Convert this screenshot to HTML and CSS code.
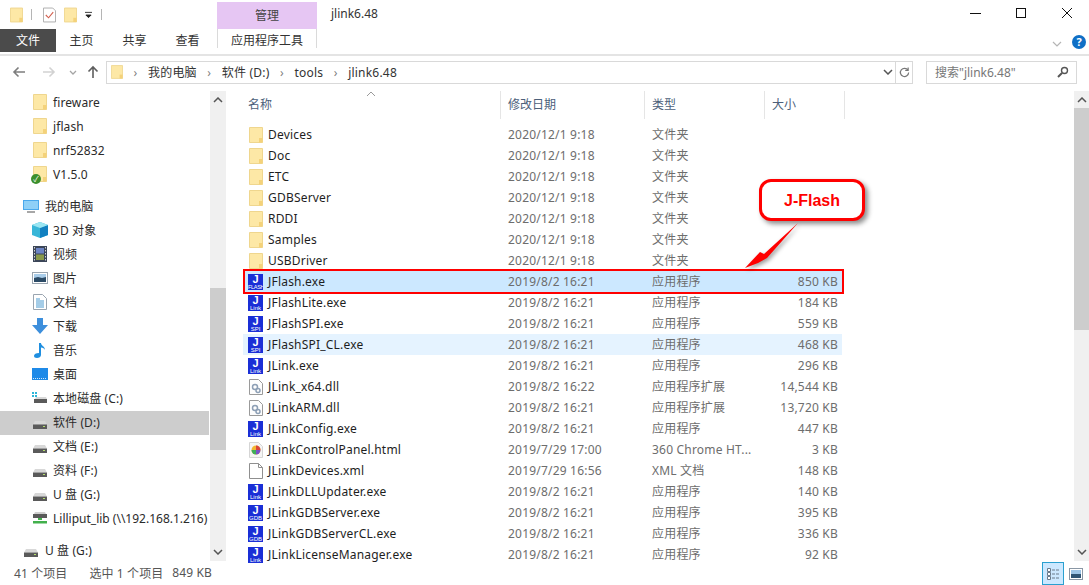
FILE: index.html
```html
<!DOCTYPE html>
<html lang="zh-CN">
<head>
    <meta charset="UTF-8">
    <title>jlink6.48</title>
    <link rel="stylesheet" href="styles.css">
</head>
<body>
    <svg class="sprites" width="0" height="0">
        <symbol id="folder" viewBox="0 0 14 16">
            <path d="M.5.500h13v15H.5z" fill="#fde8a6" stroke="#efd68e"/>
            <path d="M10 11h3.500v4.500H10z" fill="#f4d27a"/>
        </symbol>
        <symbol id="drive" viewBox="0 0 16 10">
            <path d="M1 4.500 3 1h10l2 3.500z" fill="#d8d8d8"/>
            <rect x="1" y="4.500" width="14" height="4.500" fill="#5a5a5a"/>
            <rect x="11" y="6" width="2" height="1" fill="#b5e06c"/>
        </symbol>
        <symbol id="dll" viewBox="0 0 14 16">
            <path d="M.5.500h9l4 4v11H.5z" fill="#fdfdfd" stroke="#9a9a9a"/>
            <circle cx="6" cy="8" r="2.500" fill="none" stroke="#8d9fb5" stroke-width="1.500"/>
            <circle cx="9" cy="11.500" r="2" fill="none" stroke="#8d9fb5" stroke-width="1.500"/>
        </symbol>
    </svg>

    <div class="window">
        <header class="titlebar">
            <div class="qat">
                <svg class="qat-icon"><use href="#folder"/></svg>
                <span class="qat-sep"></span>
                <svg class="qat-icon" viewBox="0 0 14 16">
                    <path d="M.5.500h10l3 3v12H.5z" fill="#fff" stroke="#aaa"/>
                    <path d="M3 8l3 3 5-6" fill="none" stroke="#d2604f" stroke-width="1.200"/>
                </svg>
                <svg class="qat-icon"><use href="#folder"/></svg>
                <svg class="qat-more" viewBox="0 0 8 8"><path d="M0 1h8M1 4h6l-3 3z" stroke="#222" fill="#222"/></svg>
                <span class="qat-sep"></span>
            </div>
            <div class="ctx-tab">管理</div>
            <div class="title">jlink6.48</div>
            <div class="controls">
                <svg viewBox="0 0 46 29"><path d="M19 13.500h11" stroke="#111"/></svg>
                <svg viewBox="0 0 46 29"><rect x="19.500" y="8.500" width="9" height="9" fill="none" stroke="#111"/></svg>
                <svg viewBox="0 0 46 29"><path d="M19 8l10 10M29 8 19 18" stroke="#111"/></svg>
            </div>
        </header>

        <nav class="ribbon">
            <a class="tab tab-file">文件</a>
            <a class="tab">主页</a>
            <a class="tab">共享</a>
            <a class="tab">查看</a>
            <a class="tab tab-tools">应用程序工具</a>
            <svg class="ribbon-chev" viewBox="0 0 10 6"><path d="M1 1l4 4 4-4" fill="none" stroke="#b5b5b5" stroke-width="1.200"/></svg>
            <span class="help">?</span>
        </nav>

        <div class="addressbar">
            <svg class="nav-arrow" viewBox="0 0 14 12"><path d="M13 6H2M6.500 1.500 2 6l4.500 4.500" fill="none" stroke="#7d7d7d" stroke-width="1.600"/></svg>
            <svg class="nav-arrow" viewBox="0 0 14 12"><path d="M1 6h11M7.500 1.500 12 6l-4.500 4.500" fill="none" stroke="#d2d2d2" stroke-width="1.600"/></svg>
            <svg class="nav-drop" viewBox="0 0 8 5"><path d="M1 1l3 3 3-3" fill="none" stroke="#a5a5a5" stroke-width="1.300"/></svg>
            <svg class="nav-arrow nav-up" viewBox="0 0 12 14"><path d="M6 13V2M1.500 6.500 6 2l4.500 4.500" fill="none" stroke="#5e5e5e" stroke-width="1.600"/></svg>
            <div class="path">
                <svg class="path-icon"><use href="#folder"/></svg>
                <span class="crumb-sep">›</span><span>我的电脑</span>
                <span class="crumb-sep">›</span><span>软件 (D:)</span>
                <span class="crumb-sep">›</span><span>tools</span>
                <span class="crumb-sep">›</span><span>jlink6.48</span>
                <svg class="path-drop" viewBox="0 0 10 6"><path d="M1 1l4 4 4-4" fill="none" stroke="#555" stroke-width="1.500"/></svg>
                <span class="path-refresh">
                    <svg viewBox="0 0 12 12"><path d="M9.800 3.500A4.500 4.500 0 1 0 10.500 6M10 .5v3.300H6.800" fill="none" stroke="#777" stroke-width="1.300"/></svg>
                </span>
            </div>
            <div class="search">
                <span>搜索"jlink6.48"</span>
                <svg viewBox="0 0 12 12"><circle cx="7.500" cy="4.500" r="3" fill="none" stroke="#555" stroke-width="1.400"/><path d="M5 7l-4 4" stroke="#555" stroke-width="2"/></svg>
            </div>
        </div>

        <main class="main">
            <aside class="sidebar">
                <ul class="tree">
                    <li class="tree-item"><svg class="ti"><use href="#folder"/></svg>fireware</li>
                    <li class="tree-item"><svg class="ti"><use href="#folder"/></svg>jflash</li>
                    <li class="tree-item"><svg class="ti"><use href="#folder"/></svg>nrf52832</li>
                    <li class="tree-item"><span class="ti-wrap"><svg class="ti"><use href="#folder"/></svg><span class="sync-badge">✓</span></span>V1.5.0</li>
                    <li class="tree-item tree-root tree-gap">
                        <svg class="ti ti-wide" viewBox="0 0 16 16"><rect x="0" y="2" width="16" height="10" fill="#4aa8ec"/><rect x="1" y="3" width="14" height="8" fill="#8fd0f7"/><path d="M4 14h8" stroke="#8a8a8a" stroke-width="1.500"/></svg>我的电脑
                    </li>
                    <li class="tree-item">
                        <svg class="ti ti-wide" viewBox="0 0 16 16"><path d="M8 0l8 3v10l-8 3-8-3V3z" fill="#38b6d8"/><path d="M8 6l8-3v10l-8 3z" fill="#1180c0"/><path d="M0 3l8-3 8 3-8 3z" fill="#9be6f2"/></svg>3D 对象
                    </li>
                    <li class="tree-item">
                        <svg class="ti" viewBox="0 0 14 16"><rect width="14" height="16" fill="#3c4658"/><rect x="3" y="2" width="8" height="5.500" fill="#6d84c4"/><rect x="3" y="8.500" width="8" height="5.500" fill="#8a9a4a"/><path d="M1.500 1v14M12.500 1v14" stroke="#d5d5d5" stroke-dasharray="1.500 1.500"/></svg>视频
                    </li>
                    <li class="tree-item">
                        <svg class="ti ti-wide" viewBox="0 0 16 14"><rect x=".5" y="1.500" width="15" height="11" fill="#fff" stroke="#9aa5b0"/><rect x="2" y="3" width="12" height="4" fill="#a9cdea"/><path d="M2 7l4-1 4 1 4-1v5H2z" fill="#2c4b66"/></svg>图片
                    </li>
                    <li class="tree-item">
                        <svg class="ti" viewBox="0 0 14 16"><path d="M.5.500h9l4 4v11H.5z" fill="#fff" stroke="#9aa5b0"/><path d="M3 5h4M3 7h8M3 9h8M3 11h8M3 13h8" stroke="#4a9ad0"/></svg>文档
                    </li>
                    <li class="tree-item">
                        <svg class="ti ti-wide" viewBox="0 0 16 16"><path d="M5 0h6v7h5l-8 9-8-9h5z" fill="#3d8fdc"/></svg>下载
                    </li>
                    <li class="tree-item">
                        <svg class="ti" viewBox="0 0 14 16"><path d="M6 1h2c0 3 4 3 4 7-1-2-2-2-4-2.500V13c0 2-2 3-4 3s-3-1-3-2.300S3 11 6 11z" fill="#1f8fe0"/></svg>音乐
                    </li>
                    <li class="tree-item">
                        <svg class="ti ti-wide" viewBox="0 0 16 14"><rect y="1" width="16" height="12" fill="#1e8ae8"/><path d="M1 11.500h14" stroke="#cfe8fa" stroke-dasharray="1 1"/></svg>桌面
                    </li>
                    <li class="tree-item">
                        <svg class="ti ti-wide" viewBox="0 0 16 14"><path d="M0 1h2v2H0zM3 1h2v2H3zM0 4h2v2H0zM3 4h2v2H3z" fill="#2db5d8"/><path d="M3 8l1-2h10l1 2z" fill="#d8d8d8"/><rect x="2" y="8" width="13" height="4" fill="#5a5a5a"/></svg>本地磁盘 (C:)
                    </li>
                    <li class="tree-item is-selected"><svg class="ti ti-wide ti-drive"><use href="#drive"/></svg>软件 (D:)</li>
                    <li class="tree-item"><svg class="ti ti-wide ti-drive"><use href="#drive"/></svg>文档 (E:)</li>
                    <li class="tree-item"><svg class="ti ti-wide ti-drive"><use href="#drive"/></svg>资料 (F:)</li>
                    <li class="tree-item"><svg class="ti ti-wide ti-drive"><use href="#drive"/></svg>U 盘 (G:)</li>
                    <li class="tree-item tree-long">
                        <svg class="ti ti-wide" viewBox="0 0 16 14"><path d="M2 3l1-2h10l1 2z" fill="#cfcfcf"/><rect x="1" y="3" width="14" height="4" fill="#5a5a5a"/><path d="M6 7h4v2H6zM1 10h14v2.500H1z" fill="#42b04c"/></svg>Lilliput_lib (\\192.168.1.216)
                    </li>
                    <li class="tree-item tree-root tree-gap"><svg class="ti ti-wide ti-drive"><use href="#drive"/></svg>U 盘 (G:)</li>
                </ul>
                <div class="scrollbar scrollbar-nav">
                    <svg viewBox="0 0 10 6"><path d="M1 5l4-4 4 4" fill="none" stroke="#555" stroke-width="1.500"/></svg>
                    <span class="thumb"></span>
                    <svg viewBox="0 0 10 6"><path d="M1 1l4 4 4-4" fill="none" stroke="#555" stroke-width="1.500"/></svg>
                </div>
            </aside>

            <section class="files">
                <div class="file-pane">
                    <div class="col-head">
                        <span>名称<svg class="sort" viewBox="0 0 8 4"><path d="M0 4l4-4 4 4" fill="none" stroke="#9a9a9a"/></svg></span>
                        <span>修改日期</span>
                        <span>类型</span>
                        <span>大小</span>
                    </div>
                    <ul class="rows">
                        <li class="row"><span class="name"><svg class="fi"><use href="#folder"/></svg>Devices</span><span>2020/12/1 9:18</span><span>文件夹</span><span></span></li>
                        <li class="row"><span class="name"><svg class="fi"><use href="#folder"/></svg>Doc</span><span>2020/12/1 9:18</span><span>文件夹</span><span></span></li>
                        <li class="row"><span class="name"><svg class="fi"><use href="#folder"/></svg>ETC</span><span>2020/12/1 9:18</span><span>文件夹</span><span></span></li>
                        <li class="row"><span class="name"><svg class="fi"><use href="#folder"/></svg>GDBServer</span><span>2020/12/1 9:18</span><span>文件夹</span><span></span></li>
                        <li class="row"><span class="name"><svg class="fi"><use href="#folder"/></svg>RDDI</span><span>2020/12/1 9:18</span><span>文件夹</span><span></span></li>
                        <li class="row"><span class="name"><svg class="fi"><use href="#folder"/></svg>Samples</span><span>2020/12/1 9:18</span><span>文件夹</span><span></span></li>
                        <li class="row"><span class="name"><svg class="fi"><use href="#folder"/></svg>USBDriver</span><span>2020/12/1 9:18</span><span>文件夹</span><span></span></li>
                        <li class="row is-picked"><span class="name"><span class="jicon"><b>J</b><i class="tight">FLASH</i></span>JFlash.exe</span><span>2019/8/2 16:21</span><span>应用程序</span><span class="size">850 KB</span></li>
                        <li class="row"><span class="name"><span class="jicon"><b>J</b><i>Link</i></span>JFlashLite.exe</span><span>2019/8/2 16:21</span><span>应用程序</span><span class="size">184 KB</span></li>
                        <li class="row"><span class="name"><span class="jicon"><b>J</b><i>SPI</i></span>JFlashSPI.exe</span><span>2019/8/2 16:21</span><span>应用程序</span><span class="size">559 KB</span></li>
                        <li class="row is-hover"><span class="name"><span class="jicon"><b>J</b><i>SPI</i></span>JFlashSPI_CL.exe</span><span>2019/8/2 16:21</span><span>应用程序</span><span class="size">468 KB</span></li>
                        <li class="row"><span class="name"><span class="jicon"><b>J</b><i>Link</i></span>JLink.exe</span><span>2019/8/2 16:21</span><span>应用程序</span><span class="size">296 KB</span></li>
                        <li class="row"><span class="name"><svg class="fi"><use href="#dll"/></svg>JLink_x64.dll</span><span>2019/8/2 16:22</span><span>应用程序扩展</span><span class="size">14,544 KB</span></li>
                        <li class="row"><span class="name"><svg class="fi"><use href="#dll"/></svg>JLinkARM.dll</span><span>2019/8/2 16:21</span><span>应用程序扩展</span><span class="size">13,720 KB</span></li>
                        <li class="row"><span class="name"><span class="jicon"><b>J</b><i>Link</i></span>JLinkConfig.exe</span><span>2019/8/2 16:21</span><span>应用程序</span><span class="size">447 KB</span></li>
                        <li class="row"><span class="name"><svg class="fi" viewBox="0 0 14 16"><path d="M.5.500h9l4 4v11H.5z" fill="#f5f5f5" stroke="#d5d5d5"/><circle cx="7" cy="8" r="4.500" fill="#f2b632"/><path d="M7 3.500A4.500 4.500 0 0 1 11.500 8H7z" fill="#d8443c"/><path d="M7 8h4.500A4.500 4.500 0 0 1 7 12.500z" fill="#7a4fc8"/><path d="M7 8v4.500A4.500 4.500 0 0 1 2.500 8z" fill="#3fae5a"/></svg>JLinkControlPanel.html</span><span>2019/7/29 17:00</span><span>360 Chrome HT...</span><span class="size">3 KB</span></li>
                        <li class="row"><span class="name"><svg class="fi" viewBox="0 0 14 16"><path d="M.5.500h9l4 4v11H.5z" fill="#fff" stroke="#8f8f8f"/><path d="M9.500.500v4h4" fill="none" stroke="#8f8f8f"/></svg>JLinkDevices.xml</span><span>2019/7/29 16:56</span><span>XML 文档</span><span class="size">148 KB</span></li>
                        <li class="row"><span class="name"><span class="jicon"><b>J</b><i>Link</i></span>JLinkDLLUpdater.exe</span><span>2019/8/2 16:21</span><span>应用程序</span><span class="size">140 KB</span></li>
                        <li class="row"><span class="name"><span class="jicon"><b>J</b><i>GDB</i></span>JLinkGDBServer.exe</span><span>2019/8/2 16:21</span><span>应用程序</span><span class="size">395 KB</span></li>
                        <li class="row"><span class="name"><span class="jicon"><b>J</b><i>GDB</i></span>JLinkGDBServerCL.exe</span><span>2019/8/2 16:21</span><span>应用程序</span><span class="size">336 KB</span></li>
                        <li class="row"><span class="name"><span class="jicon"><b>J</b><i>Link</i></span>JLinkLicenseManager.exe</span><span>2019/8/2 16:21</span><span>应用程序</span><span class="size">92 KB</span></li>
                    </ul>
                </div>
                <div class="scrollbar scrollbar-files">
                    <svg viewBox="0 0 10 6"><path d="M1 5l4-4 4 4" fill="none" stroke="#555" stroke-width="1.500"/></svg>
                    <span class="thumb"></span>
                    <svg viewBox="0 0 10 6"><path d="M1 1l4 4 4-4" fill="none" stroke="#555" stroke-width="1.500"/></svg>
                </div>
            </section>
        </main>

        <footer class="statusbar">
            <span class="status-count">41 个项目</span>
            <span class="status-sel">选中 1 个项目</span>
            <span>849 KB</span>
            <div class="views">
                <span class="view is-on">
                    <svg viewBox="0 0 14 14"><path d="M1.500 1.500h3v3h-3zM1.500 5.500h3v3h-3zM1.500 9.500h3v3h-3z" fill="#fff" stroke="#6a7a8a"/><path d="M6 3h7M6 7h7M6 11h7" stroke="#6a7a8a" stroke-dasharray="3 1"/></svg>
                </span>
                <span class="view">
                    <svg viewBox="0 0 14 12"><rect x=".5" y=".5" width="13" height="11" fill="#fff" stroke="#8a97a5"/><rect x="2" y="2" width="10" height="4" fill="#9cc4e6"/><rect x="2" y="6" width="10" height="4" fill="#2f5474"/></svg>
                </span>
            </div>
        </footer>
    </div>

    <!-- annotation drawn on top of the screenshot -->
    <div class="callout">J-Flash</div>
    <svg class="callout-arrow" viewBox="0 0 70 60">
        <path d="M56 2 22 33l-4-2L3 47l13-5 9-5z" fill="#f00"/>
    </svg>
</body>
</html>
```

FILE: styles.css
```css
/* General */
* {
    box-sizing: border-box;
}

html,
body {
    margin: 0;
    height: 100%;
    overflow: hidden;
}

body {
    position: relative;
    font-family: "Noto Sans", "Noto Sans CJK SC", sans-serif;
    font-size: 12px;
    color: #1e1e1e;
    background: #fff;
}

ul {
    margin: 0;
    padding: 0;
    list-style: none;
}

.sprites {
    position: absolute;
}

.window {
    display: flex;
    flex-direction: column;
    height: 585px;
}

/* Title bar */
.titlebar {
    display: flex;
    height: 29px;
    flex: none;
}

.qat {
    display: flex;
    align-items: center;
    width: 217px;
    padding: 0 0 0 10px;
    gap: 7px;
}

.qat-icon {
    width: 13px;
    height: 16px;
    margin-right: 1px;
}

.qat-more {
    width: 7px;
    height: 8px;
    margin-right: 2px;
}

.qat-sep {
    width: 1px;
    height: 11px;
    margin-right: 4px;
    background: #b5b5b5;
}

.ctx-tab {
    width: 100px;
    margin-top: 2px;
    text-align: center;
    line-height: 27px;
    color: #444;
    background: #e6c6f3;
}

.title {
    flex: 1;
    padding: 5px 0 0 14px;
    line-height: 17px;
    color: #333;
}

.controls {
    display: flex;
}

.controls svg {
    width: 46px;
    height: 29px;
}

/* Ribbon */
.ribbon {
    display: flex;
    align-items: flex-start;
    height: 27px;
    flex: none;
    border-bottom: 2px solid #e4e4e4;
}

.tab {
    width: 53px;
    height: 23px;
    line-height: 24px;
    text-align: center;
    color: #333;
}

.tab-file {
    width: 56px;
    margin-right: -1px;
    color: #fff;
    background: #4b4b4b;
}

.tab-tools {
    width: 100px;
    height: 19px;
    margin-left: 3px;
    border: 1px solid #dadada;
    border-width: 0 1px;
}

.ribbon-chev {
    width: 10px;
    height: 6px;
    margin: 12px 0 0 auto;
}

.help {
    width: 14px;
    height: 14px;
    margin: 6px 3px 0 10px;
    border-radius: 50%;
    font-size: 11px;
    font-weight: bold;
    line-height: 14px;
    text-align: center;
    color: #fff;
    background: #0f6fc6;
}

/* Address bar */
.addressbar {
    display: flex;
    align-items: center;
    height: 32px;
    flex: none;
    padding-left: 12px;
}

.nav-arrow {
    width: 14px;
    height: 12px;
    margin-right: 16px;
}

.nav-drop {
    width: 8px;
    height: 5px;
    margin: 0 10px 0 -3px;
}

.nav-up {
    width: 12px;
    height: 14px;
    margin-right: 0;
}

.path {
    display: flex;
    align-items: center;
    width: 807px;
    height: 23px;
    margin-left: 7px;
    padding-left: 4px;
    border: 1px solid #d9d9d9;
    letter-spacing: 0.2px;
    color: #333;
}

.path-icon {
    width: 12px;
    height: 16px;
}

.crumb-sep {
    width: 25px;
    text-align: center;
    color: #808080;
}

.path-drop {
    width: 10px;
    height: 6px;
    margin-left: auto;
    margin-right: 2px;
}

.path-refresh {
    display: flex;
    align-items: center;
    justify-content: center;
    width: 17px;
    height: 100%;
    border-left: 1px solid #d9d9d9;
}

.path-refresh svg {
    width: 11px;
    height: 11px;
}

.search {
    display: flex;
    align-items: center;
    justify-content: space-between;
    width: 151px;
    height: 23px;
    margin-left: 13px;
    padding: 0 7px 0 8px;
    border: 1px solid #d9d9d9;
    color: #777;
}

.search svg {
    width: 12px;
    height: 12px;
}

/* Main area */
.main {
    display: flex;
    flex: 1;
    min-height: 0;
}

.sidebar {
    display: flex;
    width: 226px;
    flex: none;
    padding-top: 3px;
}

.tree {
    width: 210px;
    flex: none;
}

.tree-item {
    display: flex;
    align-items: center;
    height: 24px;
    padding-left: 33px;
    padding-bottom: 2px;
    letter-spacing: 0.1px;
    color: #2b2b2b;
    white-space: nowrap;
}

.tree-long {
    letter-spacing: 0;
}

.tree-gap {
    margin-top: 8px;
}

.tree-root {
    padding-left: 24px;
}

.tree-item.is-selected {
    margin-right: 1px;
    background: #cdcdcd;
}

.ti {
    width: 14px;
    height: 16px;
    margin-right: 6px;
    flex: none;
}

.ti-wide {
    width: 16px;
    margin-left: -1px;
    margin-right: 5px;
}

.tree-root .ti-wide {
    margin-right: 6px;
}

.ti-drive {
    height: 10px;
    margin-top: 5px;
}

.ti-wrap {
    position: relative;
    display: flex;
}

.sync-badge {
    position: absolute;
    left: -2px;
    bottom: -2px;
    width: 10px;
    height: 10px;
    border-radius: 50%;
    font-size: 8px;
    line-height: 10px;
    text-align: center;
    color: #fff;
    background: #3c8f2c;
}

/* Scroll bars */
.scrollbar {
    display: flex;
    flex-direction: column;
    align-items: center;
    height: 470px;
    margin-top: 3px;
    padding-top: 6px;
    padding-bottom: 6px;
    background: #f0f0f0;
}

.scrollbar svg {
    width: 10px;
    height: 6px;
    flex: none;
}

.scrollbar-nav {
    width: 16px;
    margin-top: 0;
}

.scrollbar-files {
    width: 15px;
    flex: none;
}

.thumb {
    width: 100%;
    background: #cdcdcd;
}

.scrollbar-nav .thumb {
    height: 162px;
    margin-top: 185px;
    margin-bottom: auto;
}

.scrollbar-files .thumb {
    height: 222px;
    margin-top: 5px;
    margin-bottom: auto;
}

/* File list */
.files {
    display: flex;
    flex: 1;
    min-width: 0;
}

.file-pane {
    flex: 1;
    padding: 3px 0 0 17px;
}

.col-head,
.row {
    display: grid;
    grid-template-columns: 258px 144px 120px 77px;
    width: 599px;
}

.col-head {
    height: 28px;
    margin-bottom: 5px;
    grid-template-columns: 258px 144px 120px 80px;
    width: 603px;
    line-height: 28px;
    color: #4c607a;
}

.col-head span {
    position: relative;
    padding-left: 7px;
    border-right: 1px solid #e5e5e5;
}

.col-head span:first-child {
    padding-left: 5px;
}

.sort {
    position: absolute;
    left: 124px;
    top: 1px;
    width: 8px;
    height: 4px;
}

.row {
    align-items: center;
    height: 21px;
    line-height: 21px;
    letter-spacing: 0.2px;
    color: #6d6d6d;
}

.row > span:not(.name) {
    padding-left: 7px;
}

.row .size {
    padding-right: 4px;
    text-align: right;
}

.name {
    display: flex;
    align-items: center;
    padding-left: 6px;
    color: #1e1e1e;
}

.row.is-picked {
    position: relative;
    background: #cce8ff;
}

.row.is-picked::after {
    content: "";
    position: absolute;
    inset: -2px -2px -2px 0;
    border: 2px solid #f00;
}

.row.is-hover {
    background: #e5f3ff;
}

.fi {
    width: 14px;
    height: 16px;
    margin-right: 5px;
    flex: none;
}

.jicon {
    display: flex;
    flex-direction: column;
    width: 15px;
    height: 16px;
    margin-left: -1px;
    margin-right: 5px;
    flex: none;
    overflow: hidden;
    font-family: "Liberation Sans", sans-serif;
    letter-spacing: 0;
    text-align: center;
    color: #fff;
    background: #1a2fd6;
}

.jicon b {
    font-size: 11px;
    line-height: 9px;
    padding-top: 1px;
}

.jicon i {
    font-size: 6px;
    font-style: normal;
    line-height: 6px;
    font-weight: normal;
}

.jicon i.tight {
    font-size: 5.500px;
    letter-spacing: -0.3px;
}

/* Status bar */
.statusbar {
    display: flex;
    align-items: center;
    height: 25px;
    flex: none;
    padding-left: 14px;
    letter-spacing: 0.1px;
    color: #555;
}

.status-count {
    margin-right: 22px;
}

.status-sel {
    margin-right: 9px;
}

.views {
    display: flex;
    align-items: center;
    align-self: flex-end;
    gap: 3px;
    margin-left: auto;
    margin-right: 4px;
}

.view {
    display: flex;
    align-items: center;
    justify-content: center;
    width: 18px;
    height: 23px;
}

.view svg {
    width: 14px;
    height: 14px;
}

.view.is-on {
    width: 22px;
    border: 1px solid #2aa0d0;
    background: #cce8ff;
}

/* Annotation */
.callout {
    position: absolute;
    left: 759px;
    top: 179px;
    width: 106px;
    height: 42px;
    border: 3px solid #f00;
    border-radius: 12px;
    font-family: "Liberation Sans", sans-serif;
    font-size: 16px;
    font-weight: bold;
    line-height: 37px;
    text-align: center;
    color: #f00;
    background: #fff;
    box-shadow: 3px 3px 5px rgba(0, 0, 0, 0.45);
}

.callout-arrow {
    position: absolute;
    left: 742px;
    top: 221px;
    width: 70px;
    height: 60px;
    filter: drop-shadow(2px 2px 2px rgba(0, 0, 0, 0.4));
}
```
